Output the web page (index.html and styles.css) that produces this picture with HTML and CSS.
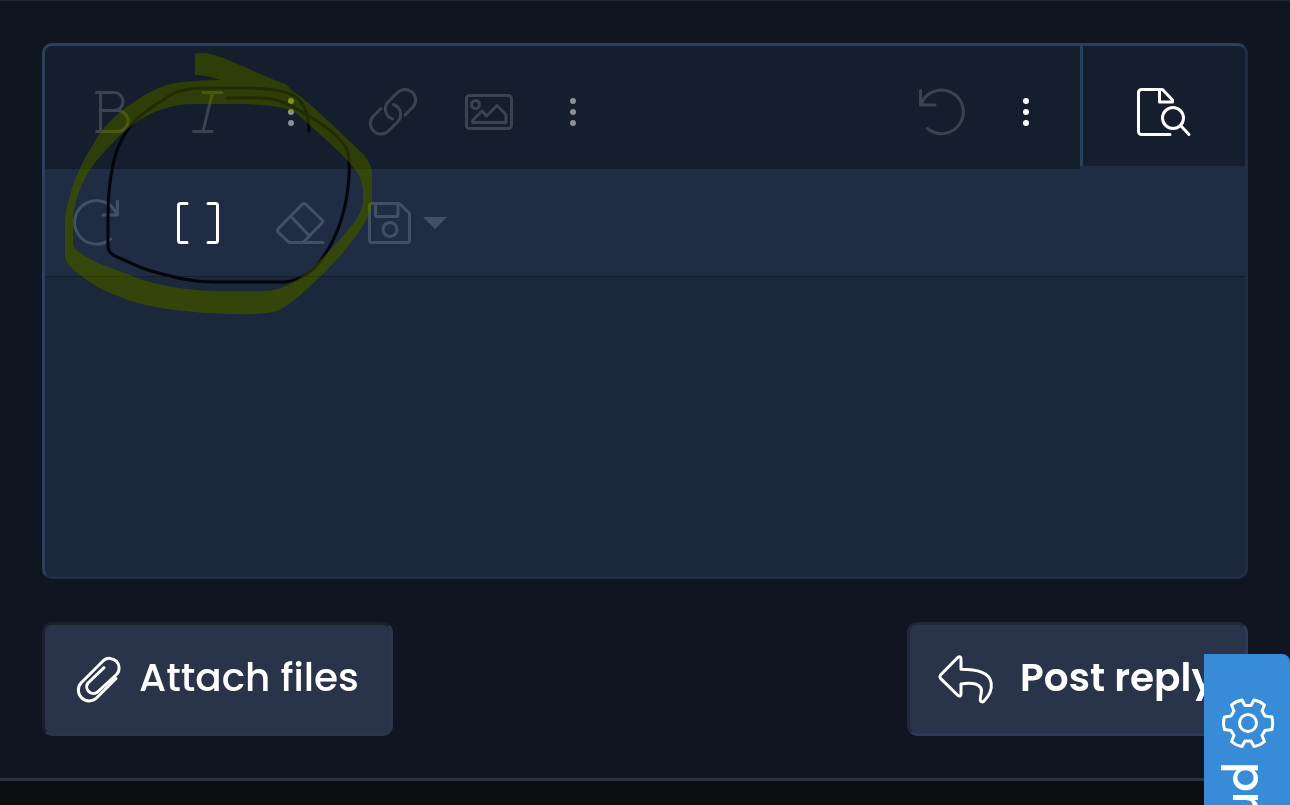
FILE: index.html
```html
<!DOCTYPE html>
<html lang="en">
<head>
<meta charset="utf-8">
<meta name="viewport" content="width=device-width, initial-scale=1">
<title>Post reply</title>
<link rel="stylesheet" href="styles.css">
</head>
<body>
<main class="reply">
  <div class="editor">
    <div class="bar">
      <div class="group">
        <button class="tool" type="button" aria-label="Bold"><svg class="icon" viewBox="0 0 56 56"><path d="M13.500 8.500H31a9 9 0 0 1 0 18H17M13.500 47.500H34.500a10.500 10.500 0 0 0 0-21H31M17.500 8.500v39"/></svg></button>
        <button class="tool" type="button" aria-label="Italic"><svg class="icon" viewBox="0 0 56 56"><path d="M24 8.500H43M14.500 47.500H33M33.500 8.500 24 47.500"/></svg></button>
        <button class="tool more" type="button" aria-label="More text options"><svg class="icon dots" viewBox="0 0 56 56"><circle cx="28" cy="17" r="3"/><circle cx="28" cy="28" r="3"/><circle cx="28" cy="39" r="3"/></svg></button>
      </div>
      <div class="group">
        <button class="tool" type="button" aria-label="Insert link"><svg class="icon" viewBox="0 0 56 56"><path d="M16 24.500 8.500 32a10.600 10.600 0 0 0 15 15L32.500 38a10.600 10.600 0 0 0-4-17.500M40 31l7.500-7.500a10.600 10.600 0 0 0-15-15L23.500 17.500a10.600 10.600 0 0 0 4 17.500"/></svg></button>
        <button class="tool" type="button" aria-label="Insert image"><svg class="icon" viewBox="0 0 56 56"><rect x="5.500" y="11.500" width="45" height="33" rx="3"/><circle cx="14.500" cy="20.500" r="4"/><path d="M11.500 38.500v-2L21 27l4.500 5L36 21.500l9 9v8z"/></svg></button>
        <button class="tool more" type="button" aria-label="More insert options"><svg class="icon dots" viewBox="0 0 56 56"><circle cx="28" cy="17" r="3"/><circle cx="28" cy="28" r="3"/><circle cx="28" cy="39" r="3"/></svg></button>
      </div>
      <div class="group end">
        <button class="tool" type="button" aria-label="Undo"><svg class="icon" viewBox="0 0 56 56"><path d="M6.500 6.500V21H21M7 20.500a21.800 21.800 0 1 1 6.500 24"/></svg></button>
        <button class="tool more active" type="button" aria-label="More options"><svg class="icon dots" viewBox="0 0 56 56"><circle cx="28" cy="17" r="3"/><circle cx="28" cy="28" r="3"/><circle cx="28" cy="39" r="3"/></svg></button>
      </div>
      <button class="preview" type="button" aria-label="Preview"><svg class="icon" viewBox="0 0 56 56"><path d="M37 50.500H8.500a3 3 0 0 1-3-3v-39a3 3 0 0 1 3-3H29.500L39.500 16V18H26.500V6"/><circle cx="40" cy="34" r="10.500"/><path d="M48 42 56 50.500"/></svg></button>
    </div>
    <div class="bar second">
      <button class="tool" type="button" aria-label="Redo"><svg class="icon" viewBox="0 0 56 56"><path d="M49.500 6V20H35M49 20A21.800 21.800 0 1 0 42.500 44"/></svg></button>
      <button class="tool active" type="button" aria-label="Toggle BB code"><svg class="icon" viewBox="0 0 56 56"><path d="M17 8.500H10.500a2 2 0 0 0-2 2v35a2 2 0 0 0 2 2H17M38 8.500h7.500a2 2 0 0 1 2 2v35a2 2 0 0 1-2 2H38"/></svg></button>
      <button class="tool" type="button" aria-label="Remove formatting"><svg class="icon" viewBox="0 0 56 56"><path d="M51 47.500H17L6 37q-1-1.500 0-3L30.500 9q1.500-1 3 0L50 25q1.500 1.500 0 3L32 46.500M19 21.500 37 40.500"/></svg></button>
      <button class="tool save" type="button" aria-label="Drafts"><svg class="icon" viewBox="0 0 56 56"><path d="M10 8.500H37.500L47.500 18.500V45a2.500 2.500 0 0 1-2.500 2.500H10A2.500 2.500 0 0 1 7.500 45V11A2.500 2.500 0 0 1 10 8.500ZM13.500 9V20a1.500 1.500 0 0 0 1.500 1.500H34.500A1.500 1.500 0 0 0 36 20V9"/><circle cx="28" cy="34.500" r="7"/></svg><svg class="caret" viewBox="0 0 24 12"><path d="M0 0H24L12 12z"/></svg></button>
    </div>
    <textarea class="message" aria-label="Message"></textarea>
    <svg class="mark" viewBox="42 43 350 290" aria-hidden="true"><path class="pen" d="M309 131C309 115 305 105 297 98C289 91 268 88 243 88H203C181 88 169 95 163 100C150 108 140 115 133 123C124 134 117 145 113 165C109 183 108 200 108 217V247Q109 254 117 257C130 262 139 268 151 271C170 276 190 282 213 282H285C300 280 309 274 318 264C334 244 343 220 347 195Q351 168 348 153Q347 145 330 130C310 116 290 103 272 99Q258 97 227 98"/></svg>
    <svg class="mark tint" viewBox="42 43 350 290" aria-hidden="true"><path class="ink" fill-rule="evenodd" d="M195 54Q203 52 211 54C230 59 262 76 280 82Q288 84 290 89C316 107 340 133 358 149Q370 160 372 171V203C370 223 341 256 323 274C309 287 293 304 277 311Q262 315 237 314C205 314 151 310 123 298C103 291 90 283 80 275Q67 266 65 257V220C67 200 77 169 91 148C101 128 117 113 133 103C146 93 163 84 182 82Q202 80 221 80Q206 75 195 75ZM73 243V217C75 195 87 172 97 160C107 149 119 134 134 124C151 111 171 104 195 104H243C268 105 286 107 296 113C312 127 335 147 349 162Q363 177 363 190V203C361 217 346 235 317 263C301 278 285 291 263 291H223C192 291 157 287 130 275C112 268 98 264 87 257Q73 250 73 243Z"/></svg>
    <svg class="mark glow" viewBox="42 43 350 290" aria-hidden="true"><path class="ink" fill-rule="evenodd" d="M195 54Q203 52 211 54C230 59 262 76 280 82Q288 84 290 89C316 107 340 133 358 149Q370 160 372 171V203C370 223 341 256 323 274C309 287 293 304 277 311Q262 315 237 314C205 314 151 310 123 298C103 291 90 283 80 275Q67 266 65 257V220C67 200 77 169 91 148C101 128 117 113 133 103C146 93 163 84 182 82Q202 80 221 80Q206 75 195 75ZM73 243V217C75 195 87 172 97 160C107 149 119 134 134 124C151 111 171 104 195 104H243C268 105 286 107 296 113C312 127 335 147 349 162Q363 177 363 190V203C361 217 346 235 317 263C301 278 285 291 263 291H223C192 291 157 287 130 275C112 268 98 264 87 257Q73 250 73 243Z"/></svg>
  </div>
  <div class="actions">
    <button class="action attach" type="button"><svg class="icon" viewBox="0 0 56 56"><path d="M45 28.500 25.500 48A10.800 10.800 0 0 1 10 33L32.500 10.500A9.600 9.600 0 0 1 46 24L26.500 42A6.600 6.600 0 0 1 17 33L33 17.700"/></svg><span>Attach files</span></button>
    <button class="action post" type="button"><svg class="icon" viewBox="0 0 56 56"><path d="M20 7.200 2.500 25Q1.300 26.700 2.500 28.400L20 45.500Q23 47 23 44V34C28 33 34 33 37.500 34C42 35.500 44 39 43.300 43C42.800 46 41.800 48 42.300 50.500Q43.500 53 46 51C51 46 54 39 53.200 33C51.500 22 39 19.500 23 19.300V9Q23 6 20 7.200Z"/></svg><span>Post reply</span></button>
  </div>
</main>
<button class="widget" type="button"><svg class="icon" viewBox="0 0 56 56"><path d="M22 5 25 10.500H31L34 5Q40 6 44.500 10L42 16L45 21L52 22Q53.500 28 52 34.500L45 35.500L42 40.500L44.500 46.500Q40 50.500 34 51.500L31 46H25L22 51.500Q16 50.500 11.500 46.500L14 40.500L11 35.500L4.500 34.500Q2.500 28 4.500 22L11 21L14 16L11.500 10Q16 6 22 5Z"/><circle cx="28" cy="28" r="8.500"/></svg><span>pr</span></button>
</body>
</html>
```
FILE: styles.css
```css
* {
  box-sizing: border-box;
}

body {
  margin: 0;
  min-height: 100vh;
  background: #0d0e12;
  color: #fff;
  font-family: Poppins, Inter, "Open Sans", sans-serif;
}

button {
  margin: 0;
  padding: 0;
  border: 0;
  background: none;
  color: inherit;
  font: inherit;
  cursor: pointer;
}

.reply {
  padding: 42px;
  background: #101621;
  border-top: 1px solid #222936;
  border-bottom: 3px solid #2b3341;
}

.editor {
  position: relative;
  border: 3px solid;
  border-color: #2b3f5e #212d42 #202d43 #2b3f5e;
  border-radius: 10px;
  background: #1b273a;
}

.bar {
  display: flex;
  background: #151e2d;
  border-radius: 8px 8px 0 0;
}

.group {
  display: flex;
  padding: 18px 0 9px 18px;
}

.end {
  margin-left: auto;
  padding-right: 18px;
}

.tool {
  display: flex;
  align-items: center;
  justify-content: center;
  width: 96px;
  height: 96px;
  color: #3b434f;
}

.more {
  width: 72px;
  color: #8b8f96;
}

.icon {
  display: block;
  flex: none;
  width: 56px;
  height: 56px;
  overflow: visible;
  fill: none;
  stroke: currentColor;
  stroke-width: 3;
  stroke-linecap: round;
  stroke-linejoin: round;
}

.dots {
  fill: currentColor;
  stroke: none;
}

.preview {
  align-self: flex-start;
  width: 165px;
  padding: 38px 50px 26px;
  border-left: 3px solid #2b3f5e;
  box-shadow: 0 3px #1f2c44;
}

.second {
  background: #1f2c44;
  border-bottom: 1px solid #141e2c;
  border-radius: 0;
  padding: 6px 0 5px;
}

.second .tool {
  width: 102px;
  color: #424f65;
}

.second .save {
  width: 106px;
  gap: 5px;
}

.more.active,
.second .active {
  color: #fff;
}

.caret {
  width: 24px;
  height: 12px;
  fill: currentColor;
}

.message {
  display: block;
  width: 100%;
  height: 299px;
  padding: 18px;
  border: 0;
  outline: 0;
  resize: none;
  background: transparent;
  color: #fff;
  font: inherit;
}

.mark {
  position: absolute;
  top: -3px;
  left: -3px;
  width: 350px;
  height: 290px;
  pointer-events: none;
}

.pen {
  fill: none;
  stroke: #03050a;
  stroke-width: 3;
  stroke-linecap: round;
}

.tint {
  fill: #ffff40;
  mix-blend-mode: multiply;
}

.glow {
  fill: #739600;
  opacity: 0.27;
}

.actions {
  display: flex;
  justify-content: space-between;
  margin-top: 43px;
}

.action {
  display: flex;
  align-items: center;
  height: 114px;
  border: 3px solid;
  border-radius: 10px;
  background: #29344a;
  font-size: 39px;
  font-weight: 500;
  line-height: 56px;
  white-space: nowrap;
}

.attach {
  gap: 12px;
  padding: 0 31px 2px 26px;
  border-color: #1a212d #2c3648 #2c3648 #1a212d;
}

.post {
  gap: 26px;
  padding: 0 30px 2px 28px;
  border-color: #1f293a #2b3b59 #2b3b59 #1f293a;
  font-weight: 600;
}

.widget {
  position: fixed;
  top: 654px;
  right: 0;
  bottom: 0;
  display: flex;
  flex-direction: column;
  align-items: center;
  gap: 11px;
  width: 86px;
  padding: 41px 0 0 2px;
  border-radius: 0 8px 0 0;
  background: #378bd7;
  font-size: 44px;
  font-weight: 500;
  line-height: 56px;
}

.widget span {
  writing-mode: vertical-rl;
}
```
